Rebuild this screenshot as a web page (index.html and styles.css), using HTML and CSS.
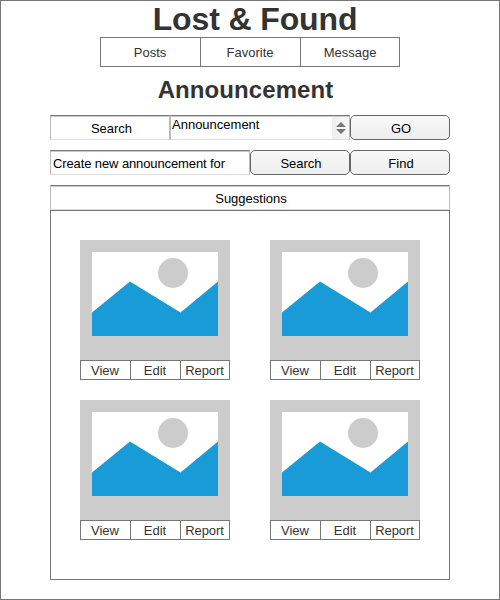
FILE: index.html
```html
<!DOCTYPE html>
<html lang="en">
<head>
<meta charset="utf-8">
<title>Lost &amp; Found</title>
<link rel="stylesheet" href="styles.css">
</head>
<body>
<svg width="0" height="0" class="defs">
  <symbol id="picture" viewBox="0 0 150 120">
    <rect width="150" height="120" fill="#ccc"/>
    <rect x="12" y="12" width="126" height="84" fill="#fff"/>
    <circle cx="93" cy="33" r="15" fill="#ccc"/>
    <path d="M12 72.5 50 41.5 100.500 72.500 138 41.500V96H12Z" fill="#199bd7"/>
  </symbol>
</svg>
<main class="page">
  <h1 class="title">Lost &amp; Found</h1>
  <nav class="nav"><a>Posts</a><a>Favorite</a><a>Message</a></nav>
  <h2 class="subtitle">Announcement</h2>
  <div class="row">
    <div class="field label">Search</div>
    <div class="field select"><span class="value">Announcement</span>
      <span class="spin"><svg width="10" height="12" viewBox="0 0 10 12"><path d="M0 5 5 0 10 5ZM0 7H10L5 12Z" fill="#777"/></svg></span>
    </div>
    <button class="button">GO</button>
  </div>
  <div class="row">
    <div class="field entry">Create new announcement for</div>
    <button class="button">Search</button>
    <button class="button">Find</button>
  </div>
  <div class="row heading"><div class="field wide">Suggestions</div></div>
  <section class="panel">
    <article class="card"><svg class="picture"><use href="#picture"/></svg><div class="actions"><a>View</a><a>Edit</a><a>Report</a></div></article>
    <article class="card"><svg class="picture"><use href="#picture"/></svg><div class="actions"><a>View</a><a>Edit</a><a>Report</a></div></article>
    <article class="card"><svg class="picture"><use href="#picture"/></svg><div class="actions"><a>View</a><a>Edit</a><a>Report</a></div></article>
    <article class="card"><svg class="picture"><use href="#picture"/></svg><div class="actions"><a>View</a><a>Edit</a><a>Report</a></div></article>
  </section>
</main>
</body>
</html>
```
FILE: styles.css
```css
* { box-sizing: border-box; }
body { margin: 0; background: #fff; font: 13px/15px "Liberation Sans", Arial, sans-serif; color: #333; }
.defs { display: none; }
.page { width: 500px; height: 600px; border: 1px solid #777; padding: 0 49px; overflow: hidden; }
.title { margin: 0 -49px; height: 36px; font-size: 32px; line-height: 37px; letter-spacing: -0.13px; text-align: center; padding-left: 10px; }
.nav { display: flex; width: 300px; height: 30px; margin: 0 auto; border: 1px solid #777; }
.nav a { flex: 0 0 100px; text-align: center; line-height: 29px; border-right: 1px solid #777; padding-right: 1px; }
.nav a:last-child { flex: 1; border-right: 0; padding-right: 0; }
.subtitle { margin: 0 0 11px; height: 37px; font-size: 24px; line-height: 45px; letter-spacing: 0.08px; text-align: center; padding-right: 9px; }
.row { display: flex; height: 25px; margin-bottom: 10px; color: #000; }
.row.heading { margin-bottom: 0; }
.field { border: 1px solid #bbb; border-top-color: #777; border-bottom-color: #ddd; box-shadow: inset 0 1px #ccc; background: #fff; text-align: center; line-height: 25px; white-space: nowrap; }
.label { width: 120px; padding-left: 3px; }
.select { display: flex; width: 180px; }
.value { flex: 1; text-align: left; line-height: 17px; padding-left: 1px; }
.spin { width: 17px; margin-top: 1px; background: linear-gradient(90deg, #eee, #f8f8f8); display: flex; align-items: center; justify-content: center; }
.entry { width: 200px; text-align: left; padding-left: 2px; letter-spacing: -0.11px; }
.wide { width: 400px; padding-left: 2px; }
.button { width: 100px; height: 25px; padding: 2px 0 0 2px; border: 1px solid #666; border-radius: 5px; background: linear-gradient(#f8f8f8, #eee); font: inherit; color: #000; }
.panel { height: 370px; border: 1px solid #777; padding: 29px; display: grid; grid-template-columns: 150px 150px; grid-auto-rows: 140px; gap: 20px 40px; align-content: start; }
.picture { display: block; width: 150px; height: 120px; }
.actions { display: flex; height: 20px; border: 1px solid #777; background: #fff; }
.actions a { flex: 0 0 50px; text-align: center; line-height: 19px; border-right: 1px solid #777; padding-right: 1px; }
.actions a:last-child { flex: 1; border-right: 0; letter-spacing: -0.1px; padding-right: 1px; }
```
